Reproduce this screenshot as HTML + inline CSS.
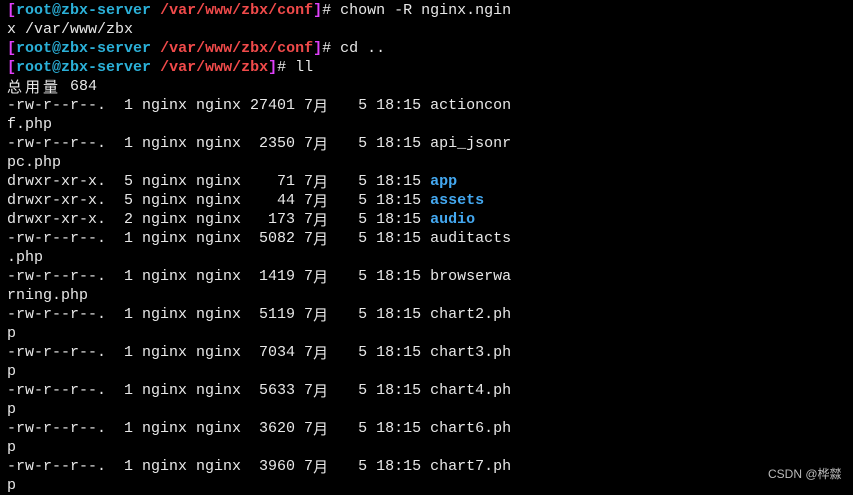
<!DOCTYPE html>
<html><head><meta charset="utf-8"><style>
body{margin:0;background:#000;width:853px;height:490px;overflow:hidden;position:relative}
.t{position:absolute;left:7px;top:1px;font-family:"Liberation Mono","Noto Sans CJK SC",monospace;font-size:15px;color:#e8e8e8}
.t div{height:19px;line-height:19px;overflow:visible;white-space:pre}
.m{color:#e040fb;font-weight:bold}.c{color:#2bb0d8;font-weight:bold}.r{color:#f04a4a;font-weight:bold}.b{color:#44a8f0;font-weight:bold}
.k{display:inline-block;width:18px;height:19px;line-height:19px;vertical-align:top;font-family:"Noto Sans CJK SC",sans-serif;font-size:15px}
.wm{position:absolute;left:768px;top:465px;font-family:"Liberation Sans","Noto Sans CJK SC",sans-serif;font-size:12px;color:#bbb}
</style></head><body>
<div class="t">
<div><span class="m">[</span><span class="c">root@zbx-server</span> <span class="r">/var/www/zbx/conf</span><span class="m">]</span># chown -R nginx.ngin</div>
<div>x /var/www/zbx</div>
<div><span class="m">[</span><span class="c">root@zbx-server</span> <span class="r">/var/www/zbx/conf</span><span class="m">]</span># cd ..</div>
<div><span class="m">[</span><span class="c">root@zbx-server</span> <span class="r">/var/www/zbx</span><span class="m">]</span># ll</div>
<div><span class="k">总</span><span class="k">用</span><span class="k">量</span> 684</div>
<div>-rw-r--r--.  1 nginx nginx 27401 7<span class="k">月</span>   5 18:15 actioncon</div>
<div>f.php</div>
<div>-rw-r--r--.  1 nginx nginx  2350 7<span class="k">月</span>   5 18:15 api_jsonr</div>
<div>pc.php</div>
<div>drwxr-xr-x.  5 nginx nginx    71 7<span class="k">月</span>   5 18:15 <span class="b">app</span></div>
<div>drwxr-xr-x.  5 nginx nginx    44 7<span class="k">月</span>   5 18:15 <span class="b">assets</span></div>
<div>drwxr-xr-x.  2 nginx nginx   173 7<span class="k">月</span>   5 18:15 <span class="b">audio</span></div>
<div>-rw-r--r--.  1 nginx nginx  5082 7<span class="k">月</span>   5 18:15 auditacts</div>
<div>.php</div>
<div>-rw-r--r--.  1 nginx nginx  1419 7<span class="k">月</span>   5 18:15 browserwa</div>
<div>rning.php</div>
<div>-rw-r--r--.  1 nginx nginx  5119 7<span class="k">月</span>   5 18:15 chart2.ph</div>
<div>p</div>
<div>-rw-r--r--.  1 nginx nginx  7034 7<span class="k">月</span>   5 18:15 chart3.ph</div>
<div>p</div>
<div>-rw-r--r--.  1 nginx nginx  5633 7<span class="k">月</span>   5 18:15 chart4.ph</div>
<div>p</div>
<div>-rw-r--r--.  1 nginx nginx  3620 7<span class="k">月</span>   5 18:15 chart6.ph</div>
<div>p</div>
<div>-rw-r--r--.  1 nginx nginx  3960 7<span class="k">月</span>   5 18:15 chart7.ph</div>
<div>p</div>
</div>
<div class="wm">CSDN @桦㵘</div>
</body></html>
